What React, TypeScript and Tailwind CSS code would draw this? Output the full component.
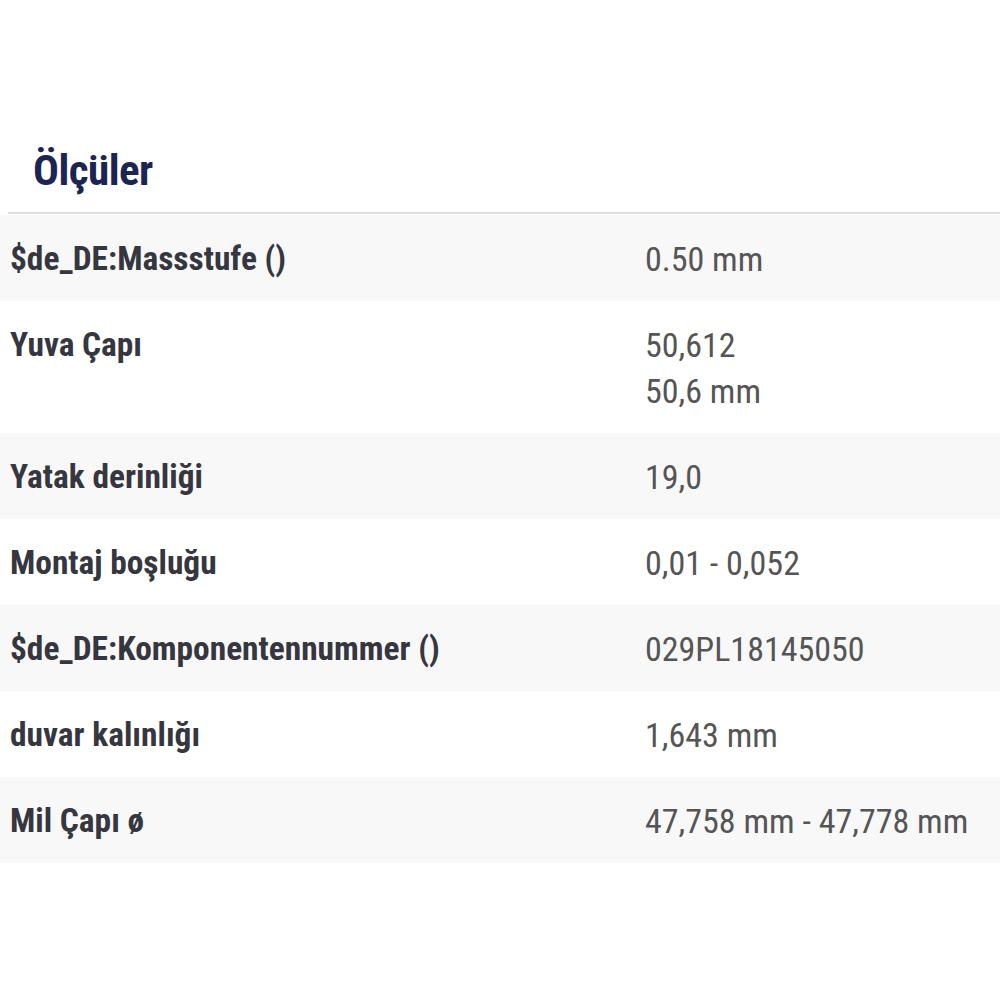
import React from 'react';

const rows: { label: string; values: string[] }[] = [
  { label: '$de_DE:Massstufe ()', values: ['0.50 mm'] },
  { label: 'Yuva Çapı', values: ['50,612', '50,6 mm'] },
  { label: 'Yatak derinliği', values: ['19,0'] },
  { label: 'Montaj boşluğu', values: ['0,01 - 0,052'] },
  { label: '$de_DE:Komponentennummer ()', values: ['029PL18145050'] },
  { label: 'duvar kalınlığı', values: ['1,643 mm'] },
  { label: 'Mil Çapı ø', values: ['47,758 mm - 47,778 mm'] },
];

export default function App() {
  return (
    <div className="w-[1000px] h-[1000px] bg-white font-['Roboto',sans-serif] font-stretch-condensed pt-[144px]">
      <h2 className="pl-[33px] text-[43px] leading-[52px] font-bold text-[#1c2452] tracking-[-0.5px]">Ölçüler</h2>
      <div className="ml-[8px] mt-[16px] h-[2px] bg-[#dddddd]" />
      <div className="mt-[1px]">
        {rows.map((row, i) => (
          <div
            key={row.label}
            className={`flex pt-[21px] pb-[19px] leading-[46px] ${i % 2 === 0 ? 'bg-[#f8f8f8]' : 'bg-white'}`}
          >
            <div className="w-[645px] pl-[10px] text-[33.4px] font-bold text-[#36363f]">{row.label}</div>
            <div className="flex flex-col text-[34px] text-[#555555]">
              {row.values.map((v) => (
                <span key={v}>{v}</span>
              ))}
            </div>
          </div>
        ))}
      </div>
    </div>
  );
}
